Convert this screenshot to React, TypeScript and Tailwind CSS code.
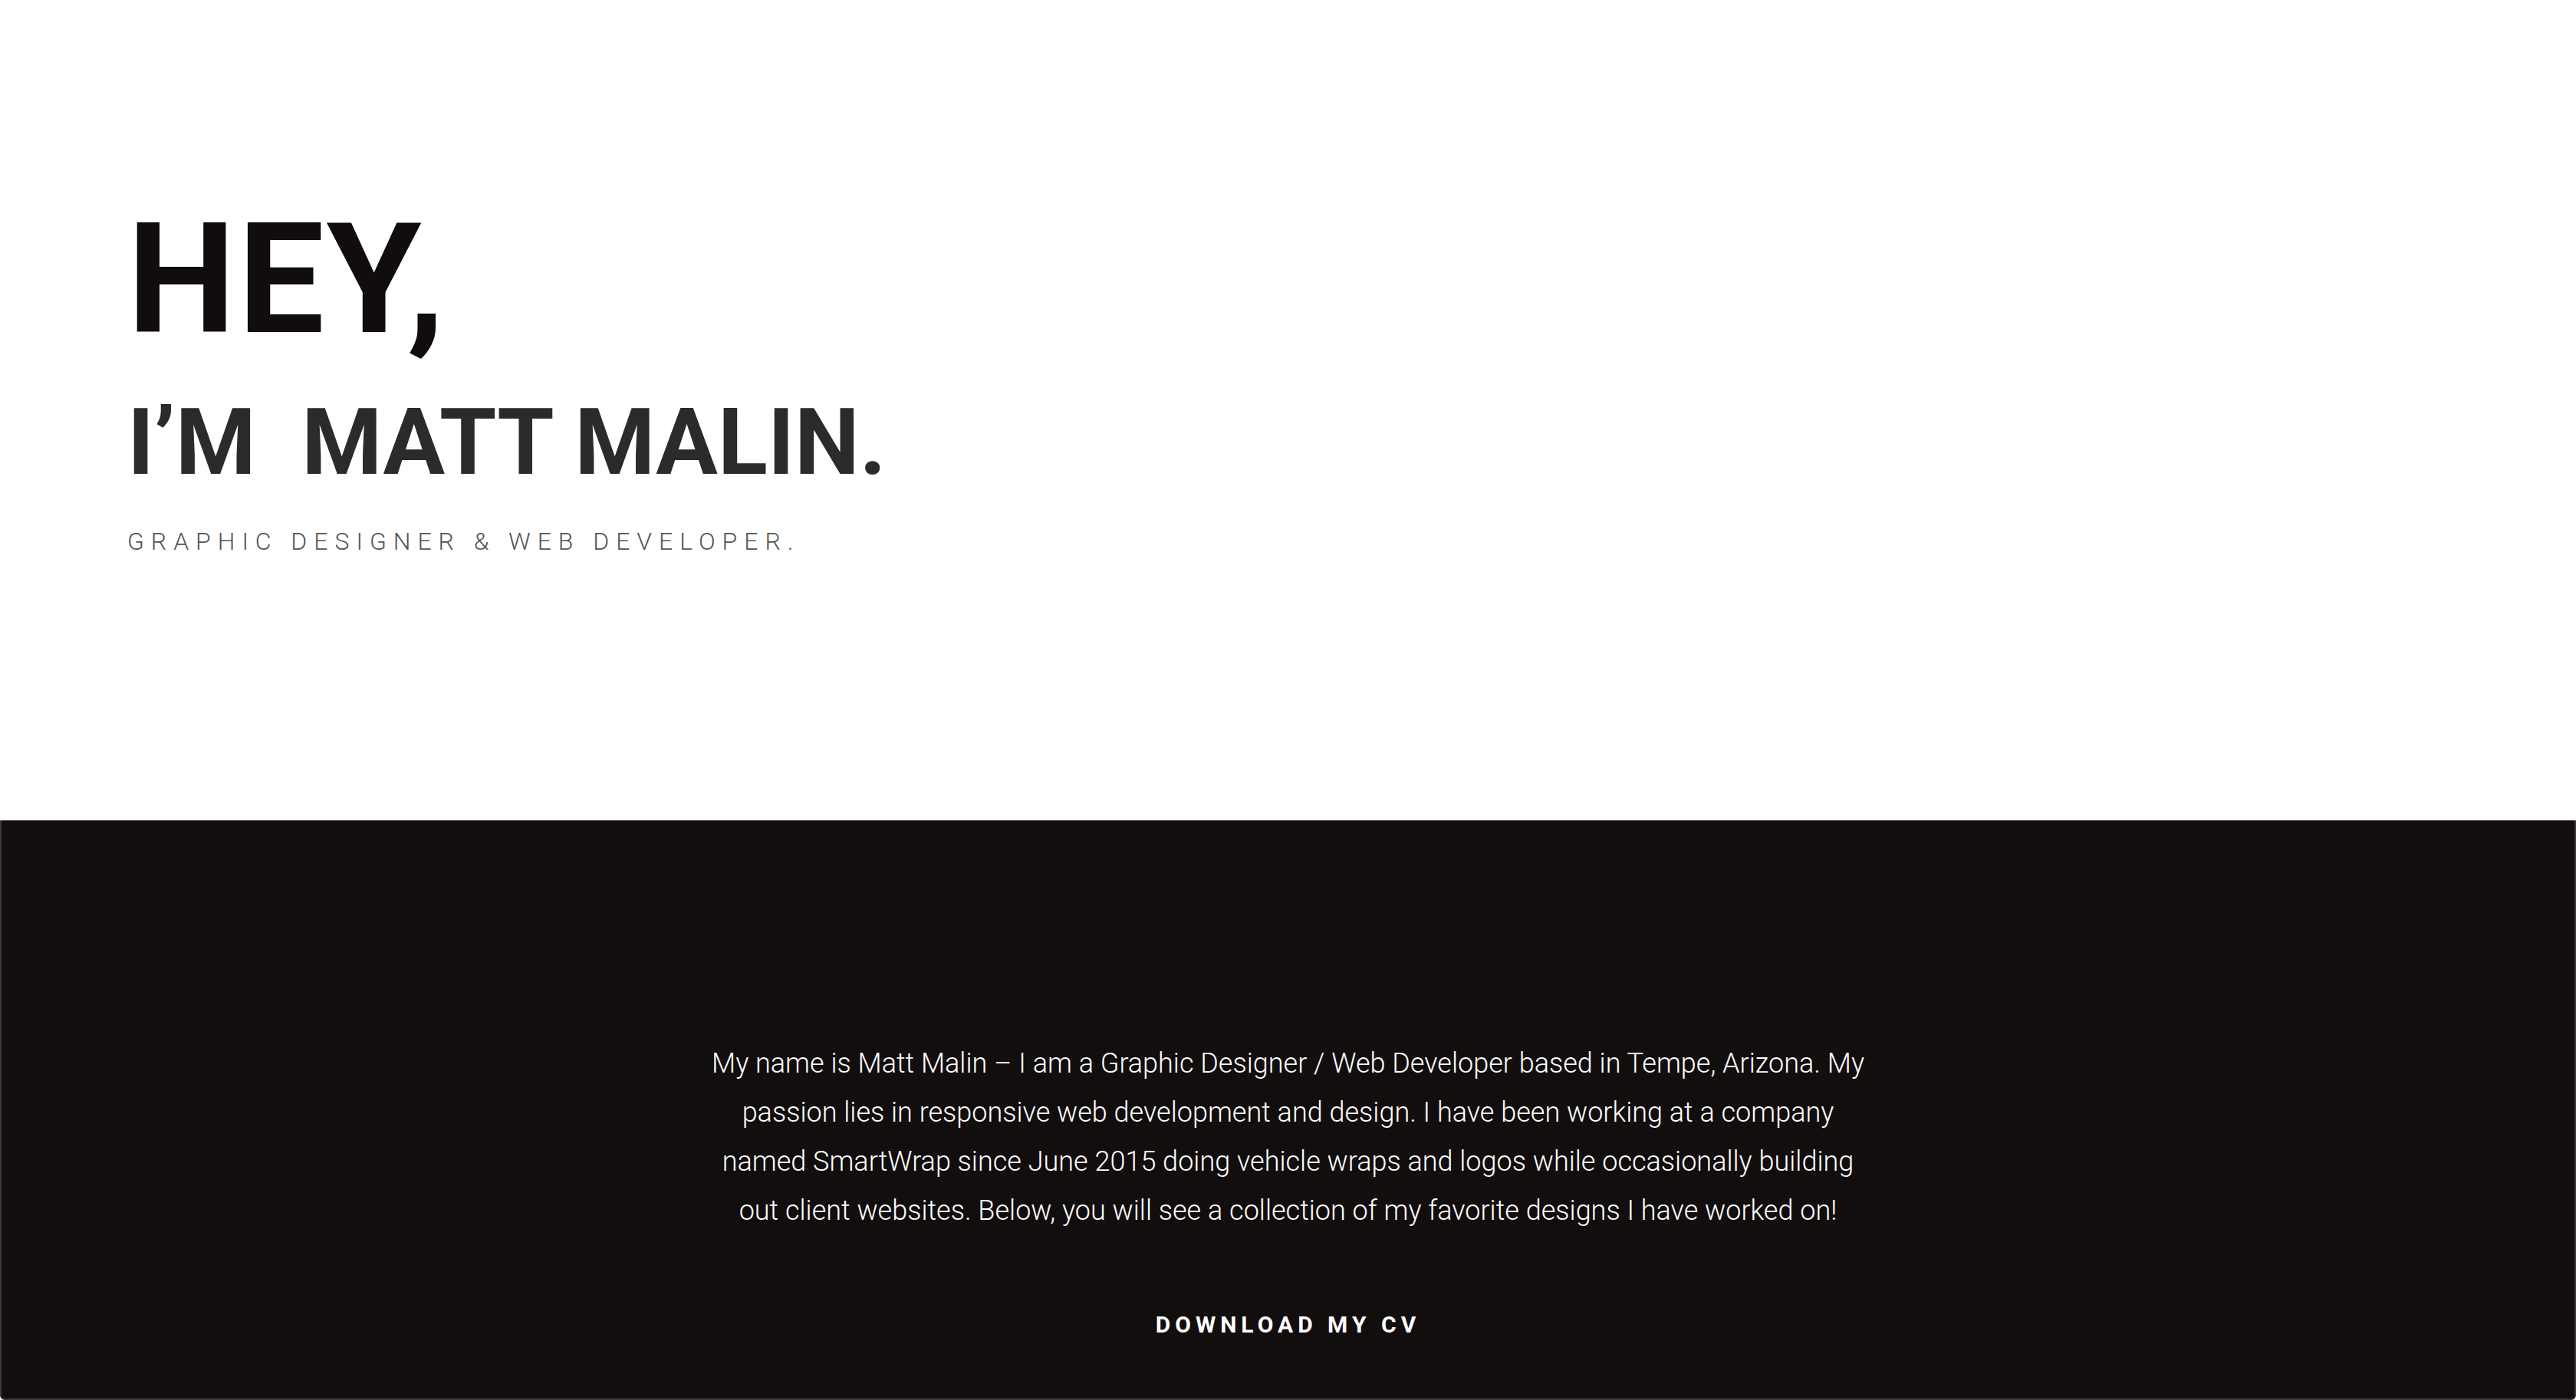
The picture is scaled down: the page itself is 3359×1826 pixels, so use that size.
import React from "react";

const App = () => {
  return (
    <div className="min-h-screen flex flex-col bg-white font-['Roboto','Liberation_Sans',sans-serif]">
      <header className="h-[1070px] shrink-0 pt-[265px] pl-[166px]">
        <h1 className="text-[200px] leading-none font-bold tracking-[3px] text-[#110d0d]">HEY,</h1>
        <h2 className="mt-[52px] text-[120px] leading-none font-bold text-[#2b2b2b] whitespace-pre">I’M  MATT MALIN.</h2>
        <p className="mt-[53px] text-[32px] leading-none font-light tracking-[0.28em] text-[#555]">
          GRAPHIC DESIGNER &amp; WEB DEVELOPER.
        </p>
      </header>

      <section className="flex-1 flex flex-col items-center pt-[285px] bg-[#120e0e] border-x-2 border-b-2 border-[#3a3838] rounded-b-[6px]">
        <p className="max-w-[1515px] text-center text-[36px] leading-[64px] font-light text-white">
          My name is Matt Malin – I am a Graphic Designer / Web Developer based in Tempe, Arizona. My passion lies in
          responsive web development and design. I have been working at a company named SmartWrap since June 2015 doing
          vehicle wraps and logos while occasionally building out client websites. Below, you will see a collection of my
          favorite designs I have worked on!
        </p>
        <a href="#" className="mt-[102px] text-[30px] leading-none font-bold tracking-[0.2em] text-white">
          DOWNLOAD MY CV
        </a>
      </section>
    </div>
  );
};

export default App;
